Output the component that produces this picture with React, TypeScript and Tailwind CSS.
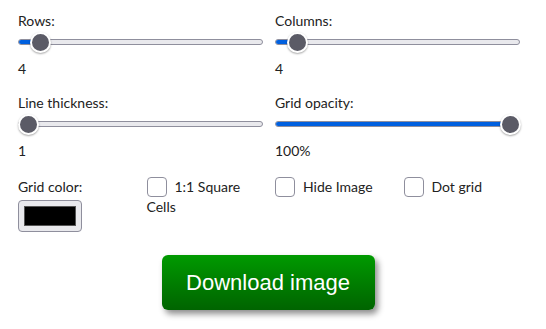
import React from 'react';

type SliderProps = { pct: number };

const Slider: React.FC<SliderProps> = ({ pct }) => {
    // thumb travels between 10px and (width - 10px)
    return (
        <div className="relative h-[22px] flex items-center">
            <div className="w-full h-[6px] rounded-full border border-[#8f8f9d] bg-[#e9e9ed] overflow-hidden">
                <div className="h-full bg-[#0060df]" style={{ width: `calc(${pct} * (100% - 20px) + 10px)` }} />
            </div>
            <div
                className="absolute top-[1px] w-[21px] h-[21px] rounded-full bg-[#5b5b66] border-2 border-white shadow-[0_1px_2px_rgba(0,0,0,0.35)]"
                style={{ left: `calc(${pct} * (100% - 20px) - 0.5px)` }}
            />
        </div>
    );
};

const Field: React.FC<{ label: string; value: string; pct: number }> = ({ label, value, pct }) => (
    <div className="flex flex-col">
        <span className="leading-5">{label}</span>
        <Slider pct={pct} />
        <span className="leading-5 mt-[6px]">{value}</span>
    </div>
);

const Check: React.FC<{ label: string }> = ({ label }) => (
    <label className="leading-5 block">
        <span className="inline-block align-top w-5 h-[20px] rounded-[4px] border-[1.5px] border-[#8f8f9d] bg-white mr-2" />
        {label}
    </label>
);

export default function App() {
    return (
        <div className="w-[546px] h-[329px] bg-white text-[#222] text-[14px] px-[18px] pt-[11px]" style={{ fontFamily: '"Segoe UI", Lato, sans-serif' }}>
            <div className="w-[502px] grid grid-cols-2 gap-x-3 gap-y-[14px]">
                <Field label="Rows:" value="4" pct={0.054} />
                <Field label="Columns:" value="4" pct={0.054} />
                <Field label="Line thickness:" value="1" pct={0} />
                <Field label="Grid opacity:" value="100%" pct={1} />
            </div>
            <div className="w-[502px] grid grid-cols-4 gap-x-3 mt-[16px]">
                <div>
                    <div className="leading-5">Grid color:</div>
                    <div className="mt-[3px] w-16 h-8 rounded-[4px] border border-[#8f8f9d] bg-[#e9e9ed] px-[5px] py-[5px]">
                        <div className="w-full h-full bg-black border border-[#555]" />
                    </div>
                </div>
                <Check label="1:1 Square Cells" />
                <Check label="Hide Image" />
                <Check label="Dot grid" />
            </div>
            <div className="flex justify-center mt-[23px] pr-[10px]">
                <button
                    className="w-[213px] h-[55px] rounded-[6px] text-white text-[22px] bg-gradient-to-b from-[#009a00] to-[#006400] shadow-[3px_4px_6px_rgba(0,0,0,0.45)]"
                    style={{ fontFamily: '"Liberation Sans", Arial, sans-serif' }}
                >
                    Download image
                </button>
            </div>
        </div>
    );
}
